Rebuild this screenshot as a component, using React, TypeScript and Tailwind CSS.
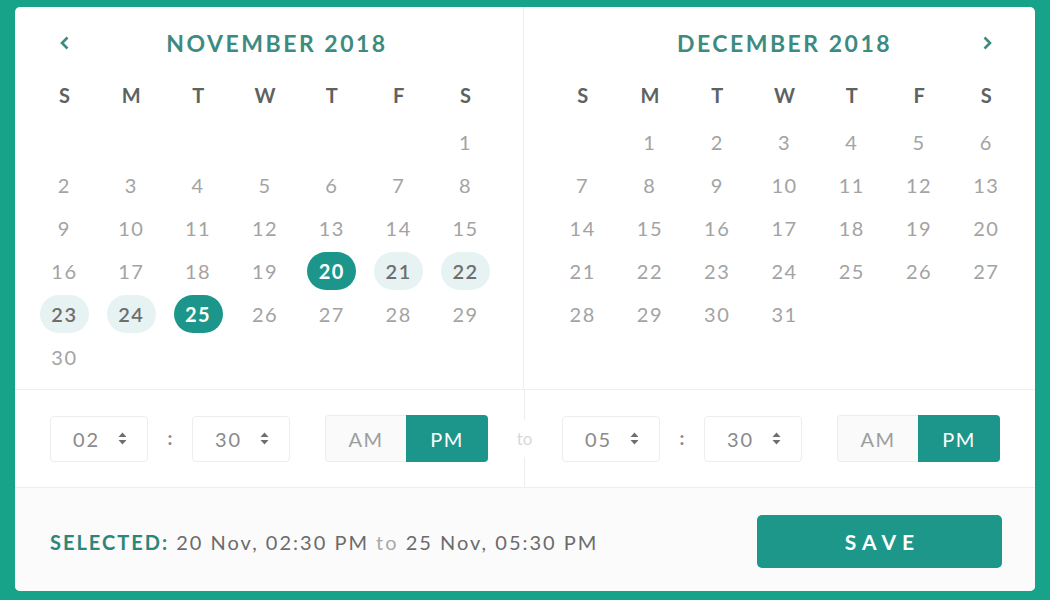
const weekdays = ['S', 'M', 'T', 'W', 'T', 'F', 'S']

const november: (number | null)[] = [null, null, null, null, null, null, ...Array.from({ length: 30 }, (_, i) => i + 1)]
const december: (number | null)[] = [null, ...Array.from({ length: 31 }, (_, i) => i + 1)]

function SortIcon() {
  return (
    <svg width="9" height="13" viewBox="0 0 9 13" className="text-[#6f6f6f]">
      <path d="M4.5 0.5 L8.5 5 H0.5 Z" fill="currentColor" />
      <path d="M4.5 12.5 L8.5 8 H0.5 Z" fill="currentColor" />
    </svg>
  )
}

function Day({ n, month }: { n: number | null; month: 'nov' | 'dec' }) {
  if (n === null) return <div className="h-[43px]" />
  const edge = month === 'nov' && (n === 20 || n === 25)
  const inRange = month === 'nov' && n > 20 && n < 25
  return (
    <div className="h-[43px] flex items-center justify-center">
      <div
        className={`w-[49px] h-[38px] rounded-full flex items-center justify-center text-[20px] tracking-[1.5px] ${
          edge
            ? 'bg-[#1c968a] text-white font-bold'
            : inRange
              ? 'bg-[#e6f3f2] text-[#6e6e6e] font-semibold'
              : 'text-[#a3a3a3]'
        }`}
      >
        {n}
      </div>
    </div>
  )
}

function Calendar({ title, days, month, side }: { title: string; days: (number | null)[]; month: 'nov' | 'dec'; side: 'left' | 'right' }) {
  return (
    <div className={`h-[382px] pt-[18px] ${side === 'left' ? 'w-[509px] pl-[16px] pr-[24px] border-r border-[#eeeeee]' : 'flex-1 pl-[25px] pr-[15px]'}`}>
      <div className="h-[36px] flex items-center">
        <div className="w-[67px] flex justify-center text-[#3d8b80]">
          {side === 'left' && (
            <svg width="14" height="16" viewBox="0 0 14 16">
              <path d="M9.5 2.5 L4 8 L9.5 13.5" fill="none" stroke="currentColor" strokeWidth="2.6" />
            </svg>
          )}
        </div>
        <div className={`flex-1 text-center text-[23px] font-bold tracking-[2.5px] text-[#3d8b80] ${side === 'left' ? 'pl-[24px]' : ''}`}>
          {title}
        </div>
        <div className="w-[67px] flex justify-center text-[#3d8b80]">
          {side === 'right' && (
            <svg width="14" height="16" viewBox="0 0 14 16">
              <path d="M4.5 2.5 L10 8 L4.5 13.5" fill="none" stroke="currentColor" strokeWidth="2.6" />
            </svg>
          )}
        </div>
      </div>
      <div className="mt-[12px] grid grid-cols-7 h-[43px] items-center">
        {weekdays.map((d, i) => (
          <div key={i} className="text-center text-[20px] font-bold text-[#5d6361]">
            {d}
          </div>
        ))}
      </div>
      <div className="mt-[4px] grid grid-cols-7">
        {days.map((n, i) => (
          <Day key={i} n={n} month={month} />
        ))}
      </div>
    </div>
  )
}

function TimeRow({ hour, minute, side }: { hour: string; minute: string; side: 'left' | 'right' }) {
  return (
    <div className={`flex items-center ${side === 'left' ? 'w-[509px] pl-[35px] pr-[36px]' : 'flex-1 pl-[37px] pr-[35px]'}`}>
      <div className="w-[98px] h-[46px] border border-[#ededed] rounded-[4px] flex items-center justify-between pl-[22px] pr-[20px]">
        <span className="text-[20px] tracking-[2px] text-[#8a8a8a]">{hour}</span>
        <SortIcon />
      </div>
      <div className="w-[44px] text-center text-[19px] font-bold text-[#8a8a8a]">:</div>
      <div className="w-[98px] h-[46px] border border-[#ededed] rounded-[4px] flex items-center justify-between pl-[22px] pr-[20px]">
        <span className="text-[20px] tracking-[2px] text-[#8a8a8a]">{minute}</span>
        <SortIcon />
      </div>
      <div className="ml-auto w-[163px] h-[47px] flex">
        <div className="w-[81px] bg-[#fafafa] border border-r-0 border-[#ededed] rounded-l-[4px] flex items-center justify-center text-[20px] tracking-[1.5px] text-[#9d9d9d]">
          AM
        </div>
        <div className="flex-1 bg-[#1c968a] rounded-r-[4px] flex items-center justify-center text-[20px] tracking-[1.5px] text-white">
          PM
        </div>
      </div>
    </div>
  )
}

export default function App() {
  return (
    <div className="h-[600px] w-full bg-[#17a38a] pt-[7px] pb-[9px] px-[15px] font-['Lato','Noto_Sans',sans-serif]">
      <div className="h-[584px] bg-white rounded-[5px] overflow-hidden flex flex-col">
        <div className="flex border-b border-[#eeeeee]">
          <Calendar title="NOVEMBER 2018" days={november} month="nov" side="left" />
          <Calendar title="DECEMBER 2018" days={december} month="dec" side="right" />
        </div>

        <div className="h-[98px] flex border-b border-[#eeeeee]">
          <TimeRow hour="02" minute="30" side="left" />
          <div className="w-px flex flex-col items-center">
            <div className="w-px flex-1 bg-[#eeeeee]" />
            <span className="py-[6px] text-[17px] text-[#d8d8d8] whitespace-nowrap">to</span>
            <div className="w-px flex-1 bg-[#eeeeee]" />
          </div>
          <TimeRow hour="05" minute="30" side="right" />
        </div>

        <div className="flex-1 bg-[#fbfbfb] flex items-center justify-between pt-[4px] pl-[35px] pr-[33px]">
          <p className="text-[20px] tracking-[2px] text-[#6b6b6b]">
            <span className="font-bold text-[#2e8579]">SELECTED:</span> 20 Nov, 02:30 PM{' '}
            <span className="text-[#a9a9a9]">to</span> 25 Nov, 05:30 PM
          </p>
          <button className="w-[245px] h-[53px] bg-[#1c978a] rounded-[5px] text-white text-[21px] font-bold tracking-[6px] pl-[6px]">
            SAVE
          </button>
        </div>
      </div>
    </div>
  )
}
